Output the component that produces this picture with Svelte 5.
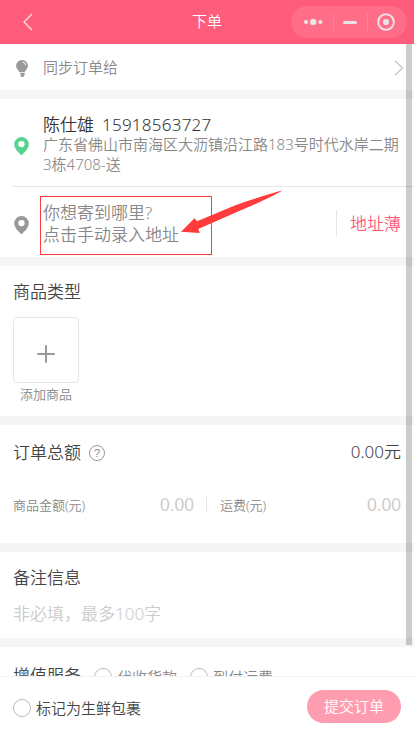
<script lang="ts">
  const services = ['代收货款', '到付运费'];
  const amounts = [
    { label: '商品金额(元)', value: '0.00' },
    { label: '运费(元)', value: '0.00' },
  ];

  let fresh = $state(false);
</script>

{#snippet pin()}
  <svg class="pin" viewBox="0 0 14 17" width="15" height="18">
    <path
      fill="currentColor"
      fill-rule="evenodd"
      d="M7 0a6.9 6.9 0 0 0-6.9 6.9C.1 11.1 5 15.500 6.300 16.700a1 1 0 0 0 1.400 0C9 15.500 13.900 11.100 13.900 6.900A6.900 6.900 0 0 0 7 0zM7 3.700a3 3 0 1 1 0 6 3 3 0 0 1 0-6z"
    />
  </svg>
{/snippet}

<div class="page">
  <header>
    <svg class="back" viewBox="0 0 10 18" width="10" height="18">
      <path d="M9 1L1 9l8 8" fill="none" stroke="#f3e3e6" stroke-width="1.3" />
    </svg>
    <h1>下单</h1>
    <div class="capsule">
      <svg viewBox="0 0 20 8" width="20" height="8">
        <circle cx="3" cy="4" r="2.1" />
        <circle cx="10.2" cy="4" r="3.2" />
        <circle cx="17.3" cy="4" r="2.1" />
      </svg>
      <i></i>
      <svg viewBox="0 0 14 3" width="14" height="3"><rect width="14" height="3" rx="1.5" /></svg>
      <i></i>
      <svg viewBox="0 0 18 18" width="18" height="18">
        <circle cx="9" cy="9" r="7.8" class="ring" />
        <circle cx="9" cy="9" r="3.1" />
      </svg>
    </div>
  </header>

  <main>
    <section class="sync">
      <svg class="bulb" viewBox="0 0 12 17" width="12" height="17">
        <path
          fill="#999"
          d="M6 0a5.900 5.900 0 0 0-6 5.800c0 3 2.200 3.900 3.400 6.200h5.200C9.800 9.700 12 8.800 12 5.800A5.900 5.900 0 0 0 6 0zM4 12.800h4.800v1.200L8 15l.5.800-1.500 1.200H5.600L4 15.800l1.600-.9L4 14z"
        />
        <path d="M6.700 2.200q2.600.3 3 3" fill="none" stroke="#fff" />
      </svg>
      <span>同步订单给</span>
      <svg class="arrow" viewBox="0 0 10 16" width="10" height="16">
        <path d="M1 .7L8.500 8 1 15.300" fill="none" stroke="#c8c8c8" stroke-width="1.5" />
      </svg>
    </section>

    <section class="address">
      <div class="sender">
        {@render pin()}
        <div>
          <p class="person"><span>陈仕雄</span><span class="phone">15918563727</span></p>
          <p class="detail">广东省佛山市南海区大沥镇沿江路183号时代水岸二期3栋4708-送</p>
        </div>
      </div>
      <div class="receiver">
        {@render pin()}
        <p>你想寄到哪里?<br />点击手动录入地址</p>
        <a href="#book">地址薄</a>
      </div>
    </section>

    <section class="goods">
      <h2>商品类型</h2>
      <button class="add" type="button">
        <span class="tile">
          <svg viewBox="0 0 18 18" width="18" height="18">
            <path d="M9 1v16M1 9h16" stroke="#999" stroke-width="2" stroke-linecap="round" />
          </svg>
        </span>
        添加商品
      </button>
    </section>

    <section class="total">
      <div class="total-heading">
        <h2>订单总额</h2>
        <span class="help">?</span>
        <span class="sum">0.00元</span>
      </div>
      <div class="amounts">
        {#each amounts as { label, value }}
          <div class="amount">
            <span>{label}</span>
            <span class="value">{value}</span>
          </div>
        {/each}
      </div>
    </section>

    <section class="remark">
      <h2>备注信息</h2>
      <p>非必填，最多<span>100</span>字</p>
    </section>

    <section class="services">
      <h2>增值服务</h2>
      {#each services as name}
        <span class="option"><b class="radio"></b>{name}</span>
      {/each}
    </section>
    <div class="scrollbar"></div>
  </main>

  <footer>
    <button class="mark" type="button" onclick={() => (fresh = !fresh)}>
      <b class="radio" class:checked={fresh}></b>标记为生鲜包裹
    </button>
    <button class="submit" type="button">提交订单</button>
  </footer>

  <div class="callout"></div>
  <svg class="pointer" viewBox="0 0 104 44" width="104" height="44">
    <path d="M103 .3Q88 4 56 15L17 31.300 14.500 28.300 1 41.700 19.700 43 18.300 39 58 21.500Q88 9 103 .3z" fill="#ff3b3b" />
  </svg>
</div>

<style>
  .page {
    position: relative;
    display: flex;
    flex-direction: column;
    width: 414px;
    height: 736px;
    overflow: hidden;
    background: #f5f5f5;
    color: #444;
    font: 350 17px/24px 'Noto Sans', 'Noto Sans CJK SC', sans-serif;
  }

  .page :global(*) {
    box-sizing: border-box;
  }

  svg {
    display: block;
    flex: none;
  }

  h1,
  h2,
  p {
    margin: 0;
    font-size: 17px;
    font-weight: inherit;
  }

  button {
    border: 0;
    padding: 0;
    background: none;
    color: inherit;
    font: inherit;
  }

  header {
    display: grid;
    grid-template-columns: 1fr auto 1fr;
    align-items: center;
    flex: none;
    height: 44px;
    padding: 0 7px 0 23px;
    background: #ff5c7c;
    color: #fff;
  }

  h1 {
    margin: 0 16px 2px 0;
    font-size: 15px;
  }

  .capsule {
    display: flex;
    align-items: center;
    justify-self: end;
    justify-content: space-between;
    width: 116px;
    height: 32px;
    padding: 0 12px;
    border-radius: 16px;
    background: #ff6d89;
    fill: #ebe3e4;
  }

  .capsule i {
    width: 1px;
    height: 18px;
    background: #ff829a;
  }

  .ring {
    fill: none;
    stroke: #ebe3e4;
    stroke-width: 2;
  }

  main {
    position: relative;
    display: flex;
    flex: 1;
    flex-direction: column;
    gap: 9px;
    min-height: 0;
    overflow: hidden;
  }

  section {
    flex: none;
    background: #fff;
  }

  .sync {
    display: flex;
    align-items: center;
    height: 46px;
    padding: 2px 10px 0 16px;
    color: #888;
    font-size: 15px;
  }

  .sync span {
    flex: 1;
    margin: 0 0 2px 15px;
  }

  .sender,
  .receiver {
    display: flex;
    align-items: center;
    margin-left: 13px;
    color: #888;
  }

  .sender {
    height: 88px;
    border-bottom: 1px solid #e6e6e6;
  }

  .pin {
    margin: 6px 14px 0 1px;
    color: #999;
  }

  .sender .pin {
    color: #56d38e;
  }

  .person {
    height: 21px;
    color: #333;
    line-height: 24px;
  }

  .phone {
    margin-left: 8px;
    letter-spacing: 0.25px;
  }

  .detail {
    width: 360px;
    font-size: 15px;
    line-height: 20px;
  }

  .sender > div {
    padding-top: 2px;
  }

  .receiver {
    height: 70px;
  }

  .receiver p {
    flex: 1;
    padding-top: 3px;
    line-height: 22px;
  }

  .receiver a {
    height: 27px;
    margin: 2px 13px 0 0;
    border-left: 1px solid #e6e6e6;
    padding-left: 13px;
    color: #ff5c7c;
    line-height: 27px;
    text-decoration: none;
  }

  .goods {
    height: 150px;
    padding: 14px 13px;
  }

  .add {
    display: flex;
    flex-direction: column;
    align-items: center;
    width: 66px;
    margin-top: 13px;
    color: #888;
    font-size: 13px;
    line-height: 23px;
  }

  .tile {
    display: grid;
    place-items: center;
    width: 66px;
    height: 66px;
    border: 1px solid #e6e6e6;
    border-radius: 4px;
    padding-top: 7px;
  }

  .total {
    height: 118px;
    padding: 16px 13px;
  }

  .total-heading {
    display: flex;
    align-items: center;
  }

  .help {
    width: 16px;
    height: 16px;
    margin-left: 8px;
    border: 1px solid #999;
    border-radius: 50%;
    color: #888;
    font: 11px/14px 'Liberation Sans', sans-serif;
    text-align: center;
  }

  .sum {
    margin: -2px 0 0 auto;
  }

  .amounts {
    display: flex;
    align-items: center;
    margin-top: 32px;
    color: #888;
    font-size: 13px;
  }

  .amount {
    display: flex;
    flex: 1;
    align-items: center;
    justify-content: space-between;
    height: 15px;
  }

  .amount:first-child {
    flex: 0 0 194px;
    border-right: 1px solid #e6e6e6;
    padding-right: 12px;
  }

  .amount:last-child {
    padding-left: 13px;
  }

  .value {
    color: #ccc;
    font: 400 17.5px/24px 'Liberation Sans', sans-serif;
  }

  .remark {
    height: 86px;
    padding: 14px 13px;
  }

  .remark p {
    margin-top: 12px;
    color: #ccc;
  }

  .services {
    display: flex;
    align-items: center;
    height: 60px;
    padding-left: 13px;
  }

  .services h2 {
    width: 81px;
    padding-bottom: 3px;
  }

  .option {
    display: flex;
    align-items: center;
    width: 96px;
    color: #888;
    font-size: 15px;
  }

  .radio {
    flex: none;
    width: 18px;
    height: 18px;
    margin-right: 5px;
    border: 1px solid #bbb;
    border-radius: 50%;
  }

  .radio.checked {
    border: 5px solid #ff5c7c;
  }

  .scrollbar {
    position: absolute;
    top: 0;
    right: 2px;
    width: 6px;
    height: 601px;
    background: rgba(0, 0, 0, 0.2);
  }

  footer {
    display: flex;
    align-items: center;
    justify-content: space-between;
    flex: none;
    height: 60px;
    border-top: 1px solid #f2f2f2;
    background: #fff;
    padding: 0 13px;
    font-size: 15px;
  }

  .mark {
    display: flex;
    align-items: center;
    padding-top: 2px;
  }

  .submit {
    width: 94px;
    height: 33px;
    margin-bottom: 1px;
    border-radius: 17px;
    background: #ff9db0;
    color: #fff;
    line-height: 33px;
  }

  .callout {
    position: absolute;
    top: 196px;
    left: 40px;
    width: 172px;
    height: 59px;
    border: 1px solid #ff3b3b;
  }

  .pointer {
    position: absolute;
    top: 190px;
    left: 180px;
  }
</style>
